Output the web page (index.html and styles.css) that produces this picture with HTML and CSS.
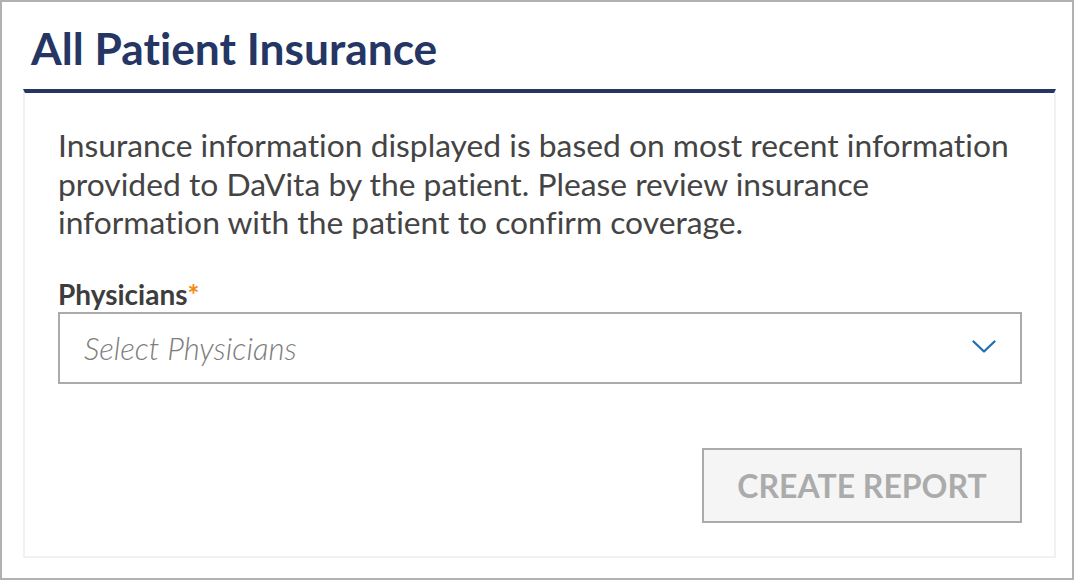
FILE: index.html
```html
<!DOCTYPE html>
<html lang="en">
<head>
<meta charset="utf-8">
<title>All Patient Insurance</title>
<link rel="stylesheet" href="styles.css">
</head>
<body>
<div class="frame">
  <h1 class="title">All Patient Insurance</h1>
  <section class="panel">
    <p class="intro">Insurance information displayed is based on most recent information provided to DaVita by the patient. Please review insurance information with the patient to confirm coverage.</p>
    <label class="field-label">Physicians<span class="req">*</span></label>
    <div class="select">
      <span class="placeholder">Select Physicians</span>
      <svg class="chevron" width="24" height="13" viewBox="0 0 24 13" aria-hidden="true"><path d="M1.5 1.5 L12 11.5 L22.5 1.5" fill="none" stroke="#1a6db3" stroke-width="2.2" stroke-linecap="round" stroke-linejoin="round"/></svg>
    </div>
    <div class="actions">
      <button class="btn" disabled>CREATE REPORT</button>
    </div>
  </section>
</div>
</body>
</html>
```

FILE: styles.css
```css
* { box-sizing: border-box; }
html, body { margin: 0; padding: 0; background: #fff; }
body {
  font-family: Lato, "Open Sans", sans-serif;
  font-variant-ligatures: no-common-ligatures;
}

.frame {
  width: 1074px;
  height: 580px;
  border: 2px solid #b1b1b1;
  display: flex;
  flex-direction: column;
  padding: 0 16px 20px 21px;
}

.title {
  margin: 0;
  padding: 18px 0 0 8px;
  height: 87px;
  font-size: 44.3px;
  line-height: 55px;
  font-weight: 700;
  color: #253665;
}

.panel {
  flex: 1;
  border-top: 4px solid #253665;
  border-left: 2px solid #f1f1f1;
  border-right: 2px solid #f1f1f1;
  border-bottom: 2px solid #f1f1f1;
  padding: 33px 32px 33px 33px;
  display: flex;
  flex-direction: column;
}

.intro {
  margin: 0;
  font-size: 31.8px;
  line-height: 38.5px;
  color: #444;
}

.field-label {
  margin-top: 36px;
  font-size: 28px;
  line-height: 32px;
  font-weight: 700;
  color: #3d3d3d;
}
.req { color: #f08a12; }

.select {
  margin-top: 2px;
  height: 72px;
  border: 2px solid #ababab;
  display: flex;
  align-items: center;
  justify-content: space-between;
  padding: 0 24px 0 24px;
}
.placeholder {
  font-size: 31px;
  font-style: italic;
  font-weight: 300;
  color: #7d7d7d;
}
.chevron { display: block; margin-top: -2px; }

.actions {
  margin-top: auto;
  display: flex;
  justify-content: flex-end;
}
.btn {
  width: 320px;
  height: 75px;
  border: 2px solid #ababab;
  background: #f5f5f5;
  color: #ababab;
  font-family: Lato, "Open Sans", sans-serif;
  font-weight: 700;
  font-size: 32px;
  padding: 0;
}
```
